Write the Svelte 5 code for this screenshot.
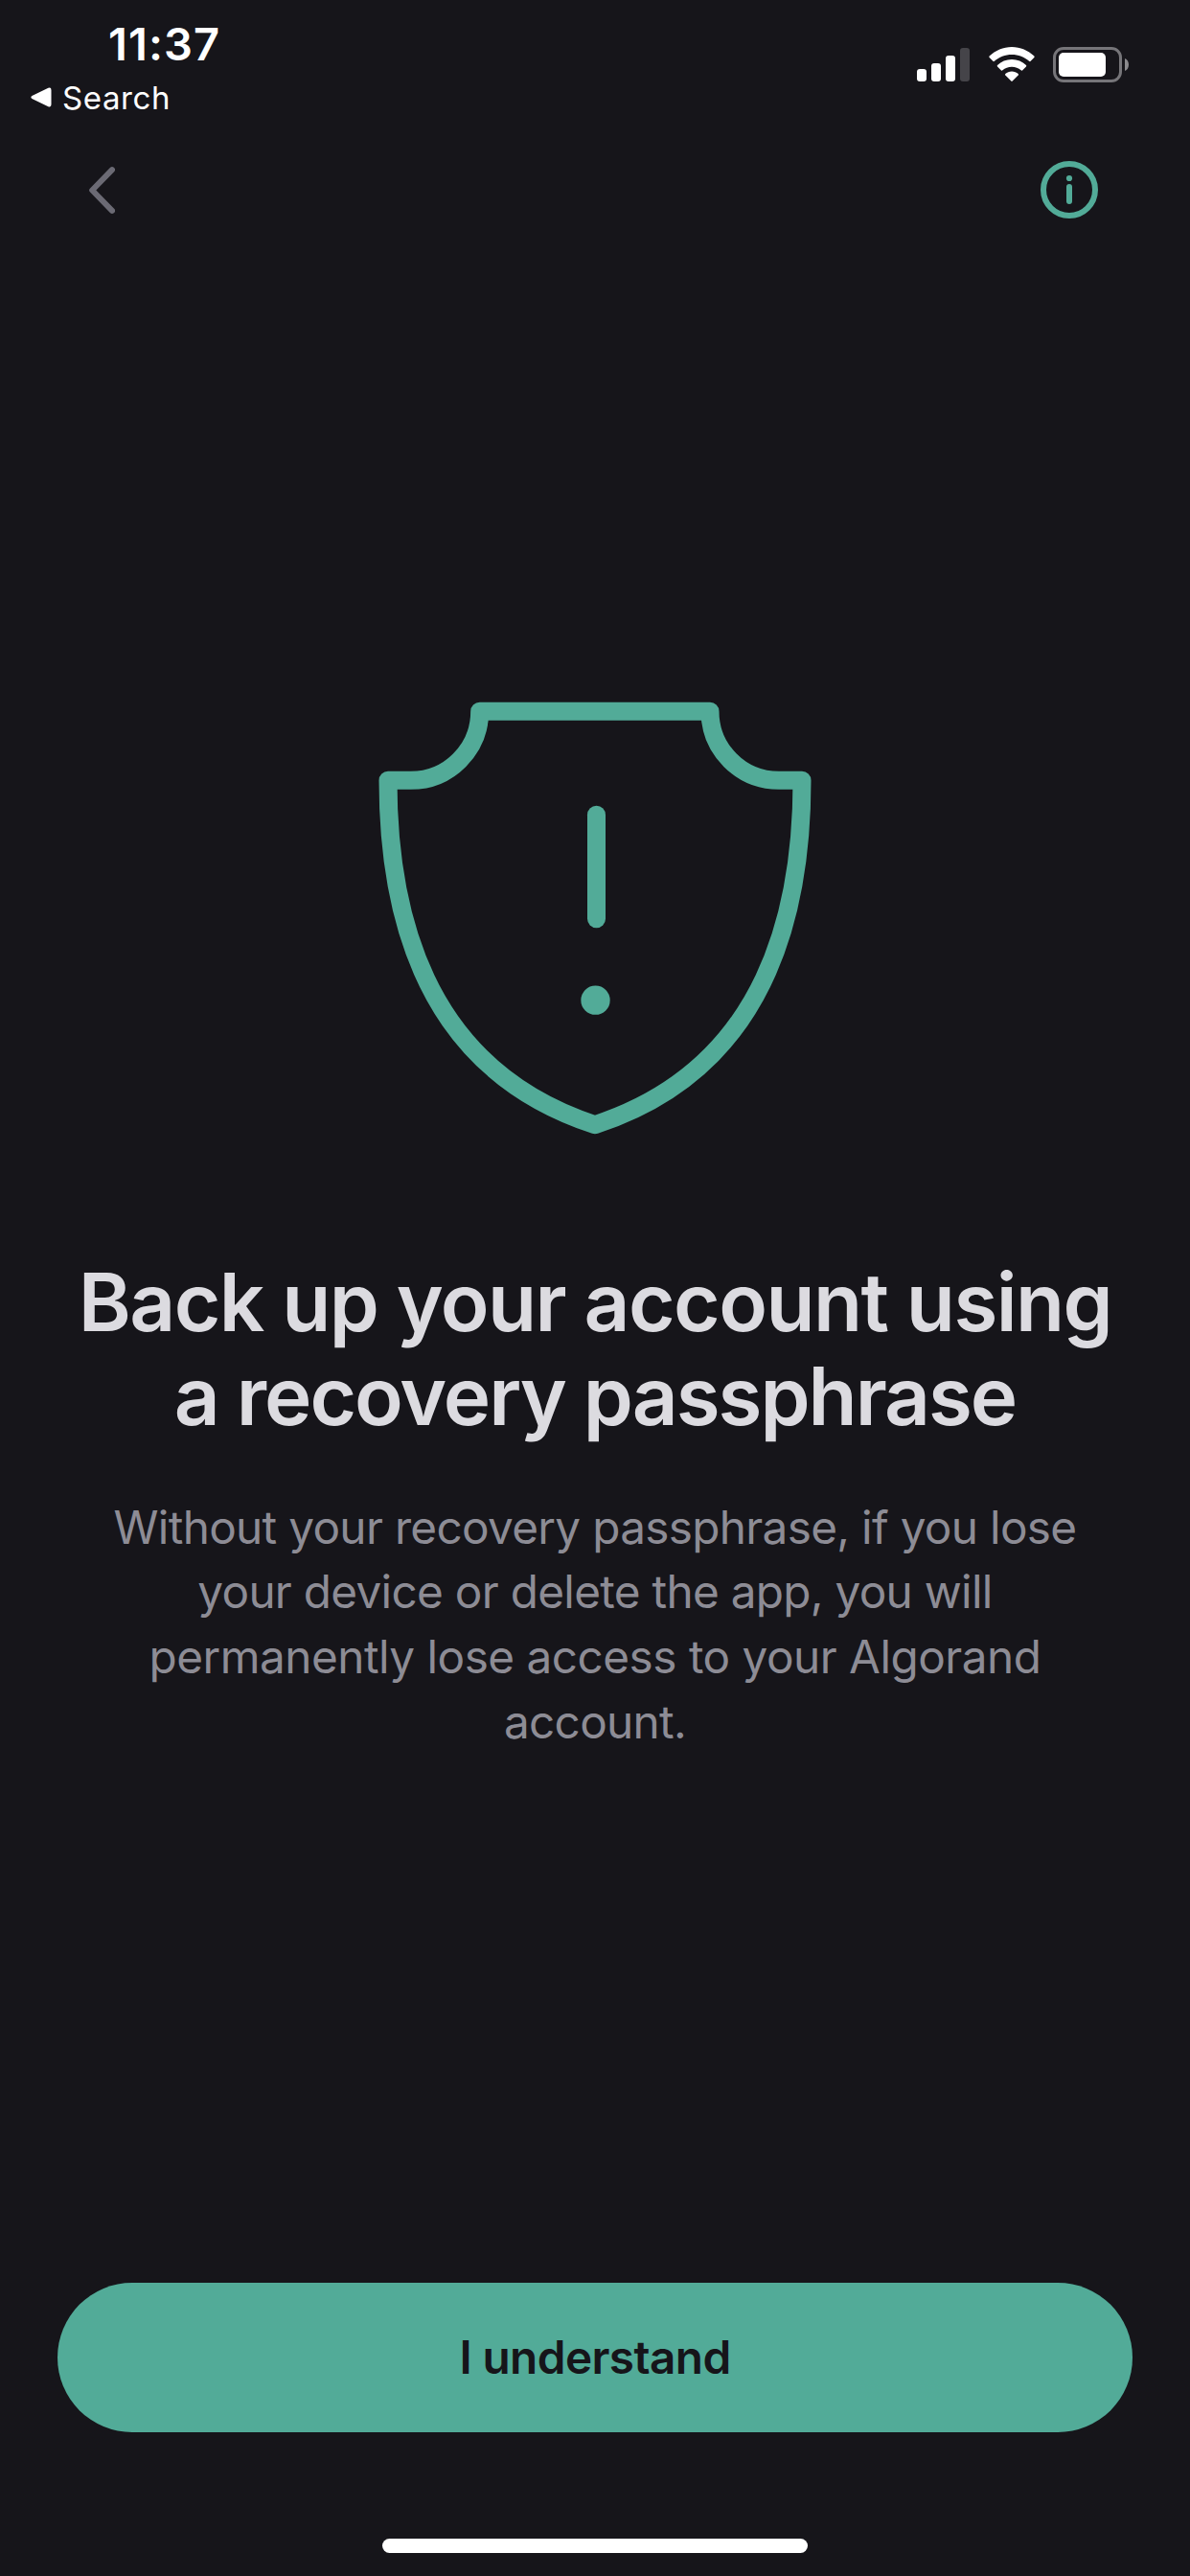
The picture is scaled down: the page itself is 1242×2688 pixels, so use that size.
<script>
  const heading = [
    { text: 'Back up your account using', tracking: -1.57 },
    { text: 'a recovery passphrase', tracking: -2 }
  ];
  const body = [
    { text: 'Without your recovery passphrase, if you lose', tracking: -0.68 },
    { text: 'your device or delete the app, you will', tracking: -0.7 },
    { text: 'permanently lose access to your Algorand', tracking: -0.5 },
    { text: 'account.', tracking: -0.69 }
  ];
  const bars = [13, 19, 27, 35];
</script>

<div class="screen">
  <header class="status">
    <div class="left">
      <div class="time">11:37</div>
      <div class="return">
        <svg width="22" height="22" viewBox="0 0 22 22" aria-hidden="true">
          <path d="M1.4 9.1 L18.4 .8 Q21.5 -.3 21.5 3 V18 Q21.5 21.3 18.4 20.2 L1.4 12 Q-.7 10.6 1.4 9.1Z" fill="#fff" />
        </svg>
        <span>Search</span>
      </div>
    </div>
    <div class="indicators">
      <svg width="55" height="37" viewBox="0 0 55 37" aria-hidden="true">
        {#each bars as h, i}
          <rect x={i * 15} y={36 - h} width="10" height={h} rx="3" fill={i < 3 ? '#fff' : '#454449'} />
        {/each}
      </svg>
      <svg class="wifi" width="48" height="37" viewBox="0 0 48 37" aria-hidden="true">
        <g fill="#fff">
          <path d="M24 0 C33 0 41 3.5 47.4 9.6 Q48 10.3 47.4 11 L43.4 15 Q42.8 15.4 42.1 14.8 C37.2 10.4 31 8 24 8 C17 8 10.8 10.4 5.9 14.8 Q5.2 15.4 4.6 15 L.6 11 Q0 10.3 .6 9.6 C7 3.5 15 0 24 0Z" />
          <path d="M24 13 C29.8 13 35 15.2 39 19 Q39.6 19.8 39 20.5 L35 24.4 Q34.4 24.9 33.6 24.3 C31 22.1 27.7 20.7 24 20.7 C20.3 20.7 17 22.1 14.4 24.3 Q13.6 24.9 13 24.4 L9 20.5 Q8.4 19.8 9 19 C13 15.2 18.2 13 24 13Z" />
          <path d="M24 25.6 C26.6 25.6 28.9 26.5 30.7 28.1 Q31.3 28.9 30.7 29.6 L24.7 35.6 Q24 36.2 23.3 35.6 L17.3 29.6 Q16.7 28.9 17.3 28.1 C19.1 26.5 21.4 25.6 24 25.6Z" />
        </g>
      </svg>
      <svg class="battery" width="80" height="37" viewBox="0 0 80 37" aria-hidden="true">
        <rect x="1.5" y="1.5" width="69" height="34" rx="9.5" fill="none" stroke="#767579" stroke-width="3" />
        <rect x="6" y="6" width="49" height="25" rx="5" fill="#fff" />
        <path d="M75 12 C77.7 13 79 15.6 79 18.5 C79 21.4 77.7 24 75 25Z" fill="#8b8a8d" />
      </svg>
    </div>
  </header>

  <nav class="bar">
    <button class="icon" aria-label="Back">
      <svg width="27" height="49" viewBox="0 0 27 49" aria-hidden="true">
        <path d="M24 3.2 L3.2 24.5 L24 45.8" fill="none" stroke="#6b6a74" stroke-width="6" stroke-linecap="round" stroke-linejoin="round" />
      </svg>
    </button>
    <button class="icon" aria-label="Information">
      <svg width="60" height="60" viewBox="0 0 60 60" aria-hidden="true">
        <circle cx="30" cy="30" r="27" fill="none" stroke="#52ab98" stroke-width="6" />
        <circle cx="30" cy="18" r="3.1" fill="#52ab98" />
        <rect x="27" y="24" width="6" height="21" rx="3" fill="#52ab98" />
      </svg>
    </button>
  </nav>

  <main>
    <svg class="shield" width="453" height="453" viewBox="73.5 67 1359 1359" aria-hidden="true">
      <g fill="none" stroke="#52ab98" stroke-width="57" stroke-linecap="round" stroke-linejoin="round">
        <path d="M390.5 98 H1111.5 C1111.5 217 1208 314 1327 314 H1399.5 C1399.5 995 1098 1279 751.5 1392 C405 1279 103.5 995 103.5 314 H175 C294 314 390.5 217 390.5 98Z" />
        <path d="M756 422 V747" />
      </g>
      <circle cx="753" cy="1002" r="45.5" fill="#52ab98" />
    </svg>
    <h1>
      {#each heading as line}
        <span style:letter-spacing="{line.tracking}px">{line.text}</span>
      {/each}
    </h1>
    <p>
      {#each body as line}
        <span style:letter-spacing="{line.tracking}px">{line.text}</span>
      {/each}
    </p>
  </main>

  <footer>
    <button class="primary">I understand</button>
    <div class="home"></div>
  </footer>
</div>

<style>
  :global(body) {
    margin: 0;
    background: #16151a;
  }
  .screen {
    box-sizing: border-box;
    width: 1242px;
    height: 2688px;
    display: flex;
    flex-direction: column;
    overflow: hidden;
    background: #16151a;
    color: #fff;
    font-family: Inter, "Liberation Sans", sans-serif;
  }
  svg {
    display: block;
    flex: none;
  }
  button {
    border: 0;
    margin: 0;
    padding: 0;
    background: none;
    font-family: inherit;
  }
  .status {
    box-sizing: border-box;
    height: 132px;
    padding: 16px 63px 0 32px;
    display: flex;
    justify-content: space-between;
    align-items: flex-start;
  }
  .time {
    padding-left: 81px;
    font-size: 47px;
    line-height: 60px;
    font-weight: 600;
    letter-spacing: 1.1px;
  }
  .return {
    display: flex;
    align-items: center;
    gap: 11px;
    height: 52px;
    font-size: 33px;
    line-height: 52px;
    letter-spacing: 0.6px;
  }
  .indicators {
    display: flex;
    padding-top: 33px;
  }
  .wifi,
  .battery {
    margin-left: 19.5px;
  }
  .bar {
    height: 132px;
    padding: 0 96px 0 93px;
    display: flex;
    justify-content: space-between;
    align-items: center;
  }
  main {
    flex: 1;
    display: flex;
    flex-direction: column;
    align-items: center;
    padding-top: 468px;
    text-align: center;
  }
  h1 {
    margin: 125px 0 0;
    font-size: 83.5px;
    line-height: 98px;
    font-weight: 600;
    color: #dcdbe0;
  }
  p {
    margin: 54.5px 0 0;
    font-size: 47.7px;
    line-height: 67.8px;
    color: #8d8c95;
  }
  h1 span,
  p span {
    display: block;
    white-space: nowrap;
  }
  footer {
    padding: 0 60px 24px;
    display: flex;
    flex-direction: column;
    align-items: center;
    gap: 111px;
  }
  .primary {
    width: 100%;
    height: 156px;
    border-radius: 78px;
    background: #52ab98;
    color: #16151a;
    font-size: 47.7px;
    font-weight: 600;
    letter-spacing: -0.57px;
  }
  .home {
    width: 444px;
    height: 15px;
    border-radius: 8px;
    background: #fff;
  }
</style>
